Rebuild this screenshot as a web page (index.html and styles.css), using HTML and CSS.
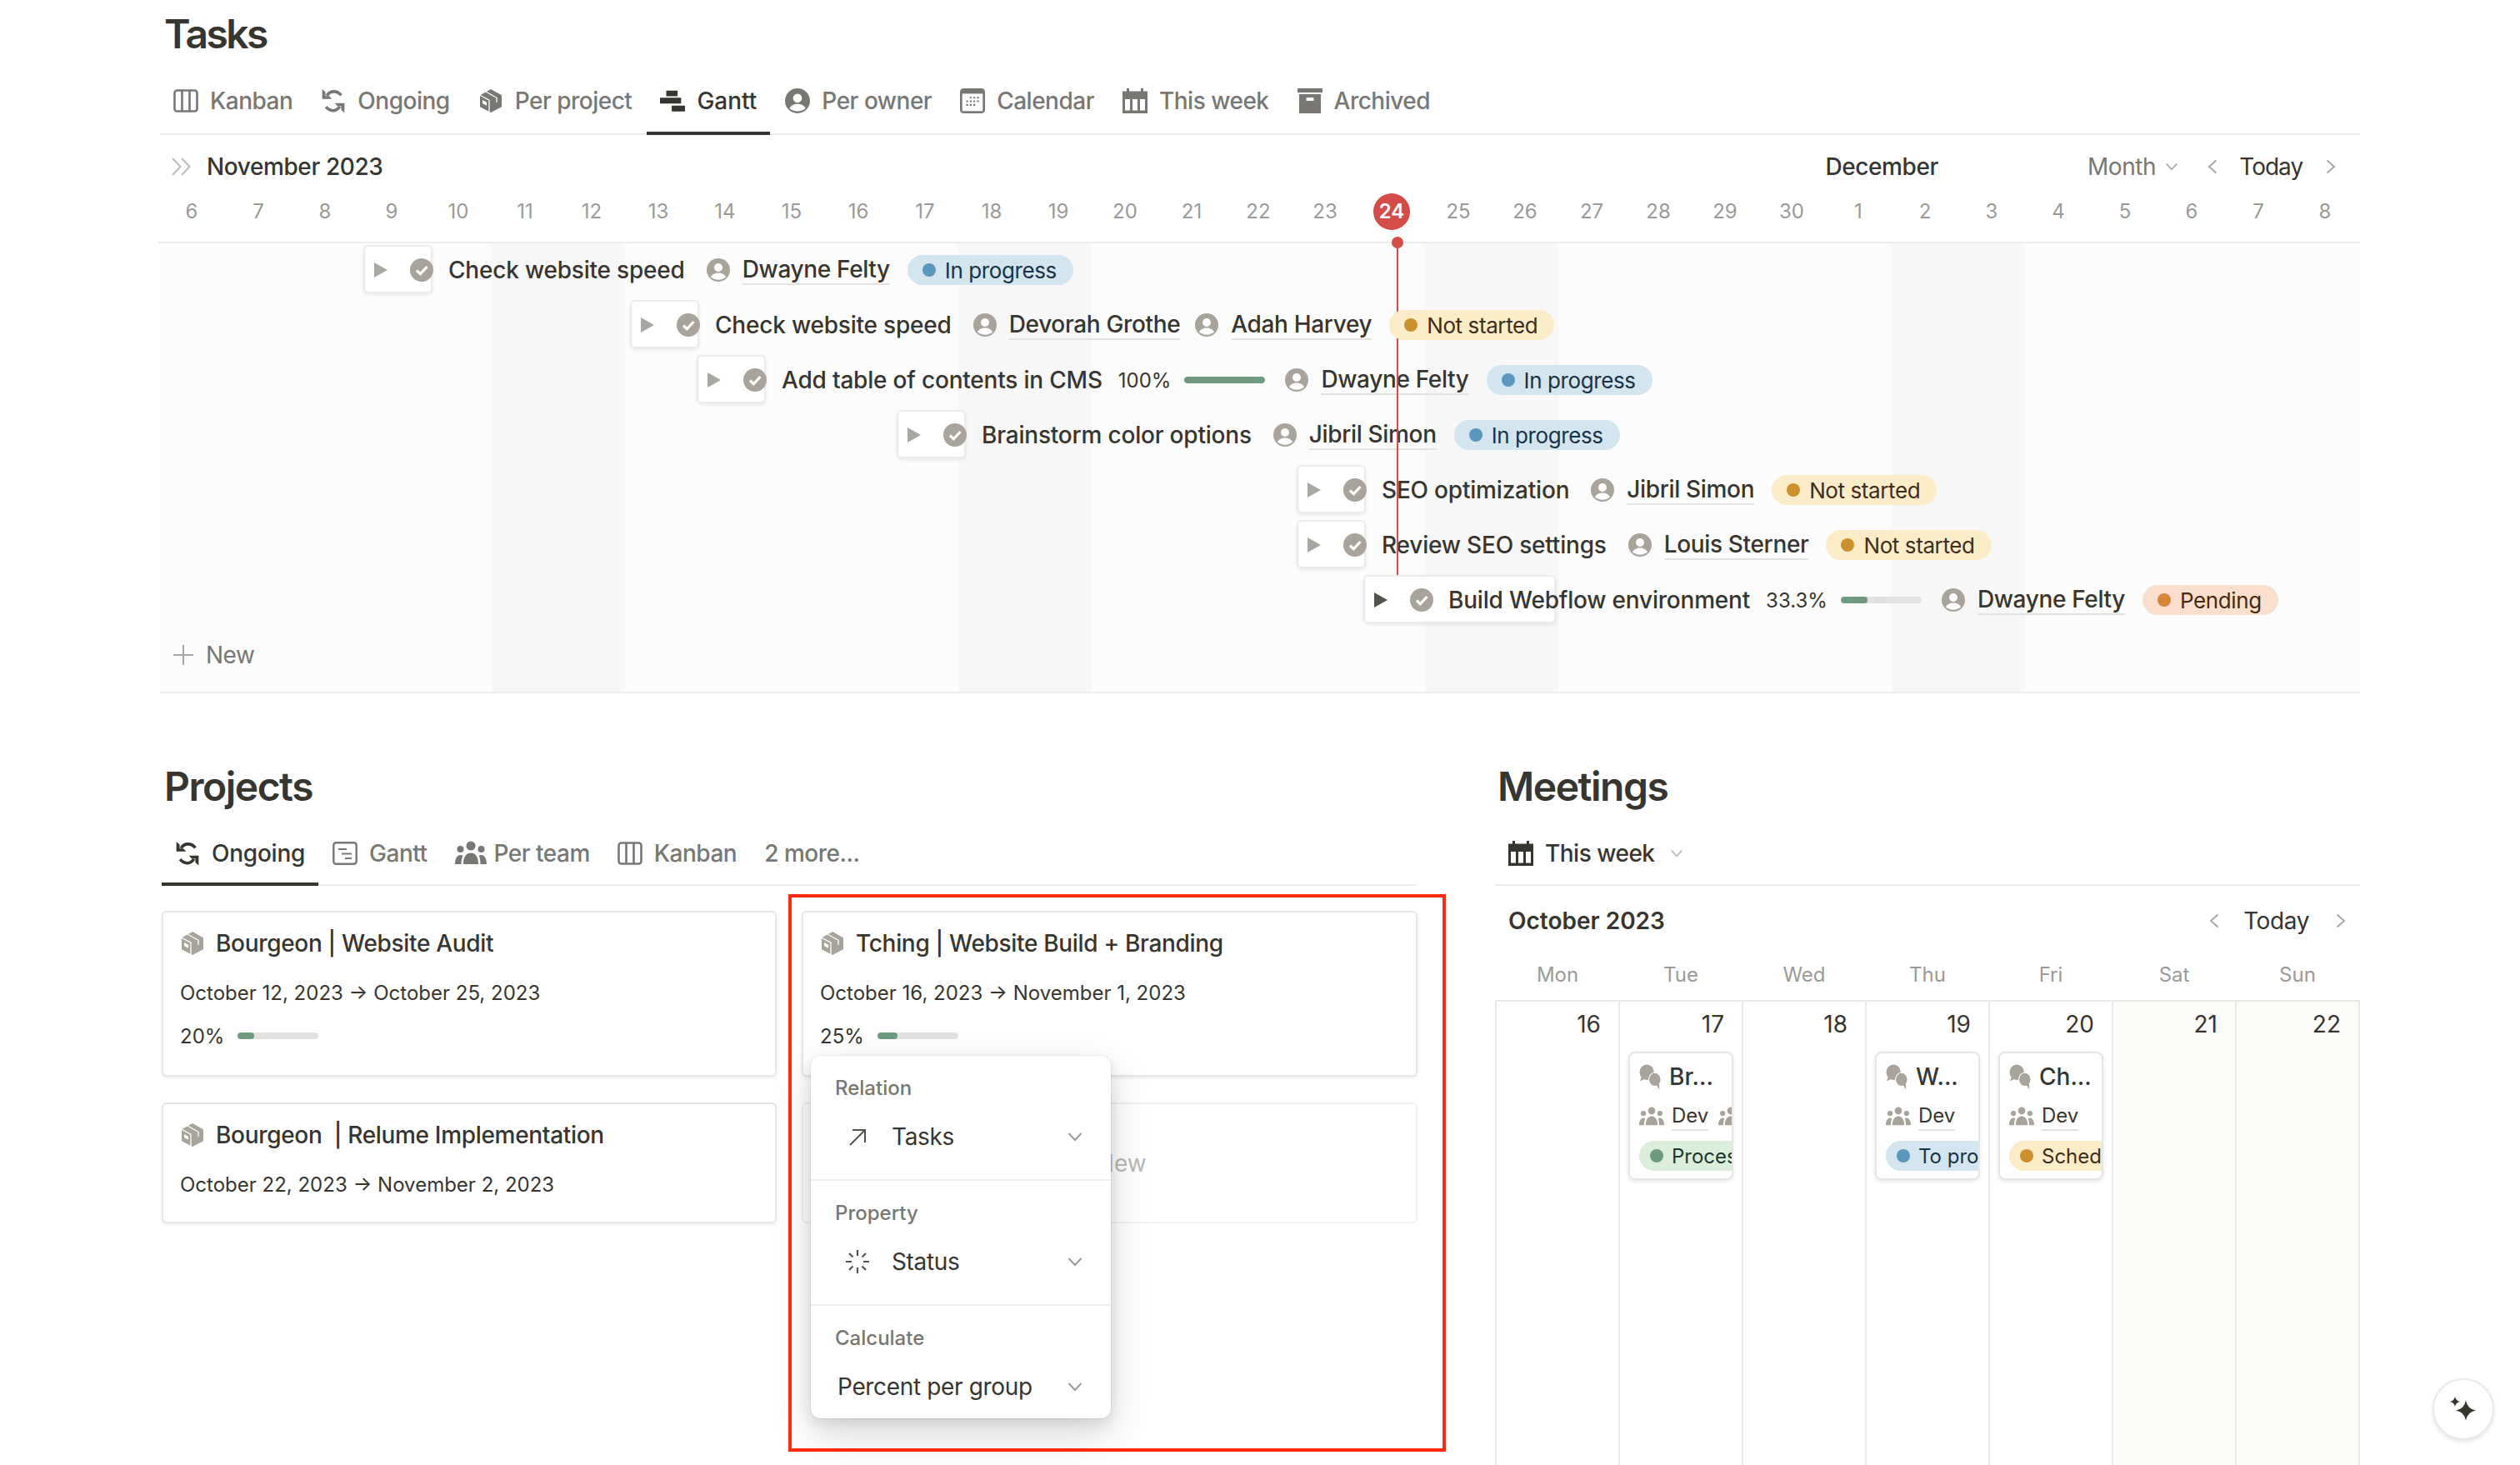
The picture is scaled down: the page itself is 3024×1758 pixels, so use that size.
FILE: index.html
```html
<!DOCTYPE html>
<html lang="en">
<head>
<meta charset="utf-8">
<title>Workspace</title>
<link rel="stylesheet" href="styles.css">
</head>
<body>
<svg class="defs" width="0" height="0" aria-hidden="true">
  <symbol id="i-kanban" viewBox="0 0 30 30"><rect x="1.500" y="2.500" width="27" height="25" rx="3" fill="none" stroke="currentColor" stroke-width="2.600"/><path d="M10.500 3v24M19.500 3v24" stroke="currentColor" stroke-width="2.600"/></symbol>
  <symbol id="i-sync" viewBox="2 1.500 26 27"><path d="M8 9.500C10 6.200 13 5 15.500 5c3.500 0 6 1.500 8 4" fill="none" stroke="currentColor" stroke-width="3.200"/><path d="M3 2.500l0 10.500 10.500 0-3-3.200-4 0 0-4.300z" fill="currentColor"/><path d="M22 21c-2 3-4.500 4.500-7.500 4.500s-5.500-1.500-7.500-4" fill="none" stroke="currentColor" stroke-width="3.200"/><path d="M27 28V17.500H16.500l3 3.200h4v4.300z" fill="currentColor"/></symbol>
  <symbol id="i-box" viewBox="0 0 30 30"><path d="M15 1l13 7.200v14L15 29 2 22.200V8.200z" fill="currentColor"/><path d="M8.500 3.800L22 11.300v5.500M2 8.200l11 6V29" fill="none" stroke="#fff" stroke-width="1.300"/><path d="M5 14l5 2.800v4L5 18z" fill="#fff"/></symbol>
  <symbol id="i-gantt" viewBox="0 0 32 28"><path d="M8 1h14.500v7H8zM0 10h27v7.500H0zM15 20h17v7.500H15z" fill="currentColor"/></symbol>
  <symbol id="i-person" viewBox="0 0 28 28"><circle cx="14" cy="14" r="14" fill="currentColor"/><circle cx="14" cy="11" r="5" fill="#fff"/><path d="M5 22.500c1.500-3.500 5-5 9-5s7.500 1.500 9 5c-2.300 2-5.500 3.200-9 3.200s-6.700-1.200-9-3.200z" fill="#fff"/></symbol>
  <symbol id="i-check" viewBox="0 0 28 28"><circle cx="14" cy="14" r="14" fill="currentColor"/><path d="M8 14.500l4.300 4.300L20.500 10" fill="none" stroke="#fff" stroke-width="3.200"/></symbol>
  <symbol id="i-cal" viewBox="0 0 28 28"><rect x="0" y="0" width="28" height="28" rx="4" fill="currentColor"/><rect x="2.500" y="6" width="23" height="19.500" fill="#fff"/><g fill="currentColor"><path d="M11 9.500h2v2h-2zM15 9.500h2v2h-2zM19 9.500h2v2h-2zM7 13.500h2v2H7zM11 13.500h2v2h-2zM15 13.500h2v2h-2zM19 13.500h2v2h-2zM7 17.500h2v2H7zM11 17.500h2v2h-2zM15 17.500h2v2h-2z"/></g></symbol>
  <symbol id="i-week" viewBox="0 0 30 30"><path d="M0 3.500h5V0h3v3.500h14V0h3v3.500h5V30H0z" fill="currentColor"/><path d="M3 13h6v13.500H3zM12 13h6v13.500h-6zM21 13h6v13.500h-6z" fill="#fff"/></symbol>
  <symbol id="i-archive" viewBox="0 0 30 30"><path d="M0 0h30v5H0zM2 7h26v23H2z" fill="currentColor"/><rect x="10.500" y="11" width="9" height="4" rx="1" fill="#fff"/></symbol>
  <symbol id="i-list" viewBox="0 0 30 28"><rect x="1.300" y="1.300" width="27.400" height="25.400" rx="3" fill="none" stroke="currentColor" stroke-width="2.400"/><path d="M7 9h10M11 14.500h12M15 20h8" stroke="currentColor" stroke-width="2.200"/></symbol>
  <symbol id="i-team" viewBox="0 0 38 30"><circle cx="19" cy="6" r="5.500" fill="currentColor"/><circle cx="6.500" cy="10" r="4" fill="currentColor"/><circle cx="31.500" cy="10" r="4" fill="currentColor"/><path d="M10 28c0-9 3.500-13.500 9-13.500S28 19 28 28z" fill="currentColor"/><path d="M0 28c0-6.500 2.500-11 6.500-11 1.200 0 2 .3 2.800.8C8 20.500 7.500 24 7.500 28zM38 28c0-6.500-2.500-11-6.500-11-1.200 0-2 .3-2.800.8 1.300 2.700 1.800 6.200 1.800 10.200z" fill="currentColor"/></symbol>
  <symbol id="i-chat" viewBox="0 0 28 32"><ellipse cx="9.500" cy="10" rx="9" ry="9.500" fill="currentColor"/><path d="M3 16l-2 5 7-3z" fill="currentColor"/><ellipse cx="19.500" cy="19" rx="8" ry="9" fill="#fff"/><ellipse cx="19.500" cy="19" rx="7" ry="8" fill="currentColor"/><path d="M21 25l4 6.500v-8z" fill="currentColor"/></symbol>
  <symbol id="i-down" viewBox="0 0 18 12"><path d="M1.500 2L9 10l7.500-8" fill="none" stroke="currentColor" stroke-width="2"/></symbol>
  <symbol id="i-left" viewBox="0 0 12 18"><path d="M10.500 1.500L2 9l8.500 7.500" fill="none" stroke="currentColor" stroke-width="2"/></symbol>
  <symbol id="i-right" viewBox="0 0 12 18"><path d="M1.500 1.500L10 9l-8.500 7.500" fill="none" stroke="currentColor" stroke-width="2"/></symbol>
  <symbol id="i-play" viewBox="0 0 16 18"><path d="M0 0l16 9-16 9z" fill="currentColor"/></symbol>
  <symbol id="i-plus" viewBox="0 0 24 24"><path d="M12 0v24M0 12h24" stroke="currentColor" stroke-width="2"/></symbol>
</svg>

<div class="page">
  <section class="tasks">
    <h1 class="title">Tasks</h1>
    <nav class="tabs">
      <a class="tab"><svg class="ic"><use href="#i-kanban"/></svg>Kanban</a>
      <a class="tab"><svg class="ic"><use href="#i-sync"/></svg>Ongoing</a>
      <a class="tab"><svg class="ic"><use href="#i-box"/></svg>Per project</a>
      <a class="tab on"><svg class="ic"><use href="#i-gantt"/></svg>Gantt</a>
      <a class="tab"><svg class="ic"><use href="#i-person"/></svg>Per owner</a>
      <a class="tab"><svg class="ic"><use href="#i-cal"/></svg>Calendar</a>
      <a class="tab"><svg class="ic"><use href="#i-week"/></svg>This week</a>
      <a class="tab"><svg class="ic"><use href="#i-archive"/></svg>Archived</a>
    </nav>
    <div class="ghead">
      <svg class="dbl" viewBox="0 0 24 22"><path d="M1 1l9.500 10L1 21M12 1l9.500 10L12 21" fill="none" stroke="#bdbcb9" stroke-width="2"/></svg>
      <span class="month nov">November 2023</span>
      <span class="month dec">December</span>
      <span class="ctl grey">Month</span>
      <svg class="chev-d"><use href="#i-down"/></svg>
      <svg class="chev-l"><use href="#i-left"/></svg>
      <span class="ctl today">Today</span>
      <svg class="chev-r"><use href="#i-right"/></svg>
    </div>
    <div class="days">
      <span>6</span><span>7</span><span>8</span><span>9</span><span>10</span><span>11</span><span>12</span><span>13</span><span>14</span><span>15</span><span>16</span><span>17</span><span>18</span><span>19</span><span>20</span><span>21</span><span>22</span><span>23</span><span class="now"><b>24</b></span><span>25</span><span>26</span><span>27</span><span>28</span><span>29</span><span>30</span><span>1</span><span>2</span><span>3</span><span>4</span><span>5</span><span>6</span><span>7</span><span>8</span>
    </div>
    <div class="gbody">
      <div class="shade">
        <i class="we w1"></i><i class="we w2"></i><i class="we w3"></i><i class="we w4"></i>
      </div>
      <div class="rows">
        <div class="bar" style="margin-left:244px">
          <div class="handle"></div>
          <svg class="play"><use href="#i-play"/></svg><svg class="chk"><use href="#i-check"/></svg>
          <span class="name">Check website speed</span>
          <svg class="who"><use href="#i-person"/></svg><span class="owner">Dwayne Felty</span>
          <span class="pill blue"><i></i>In progress</span>
        </div>
        <div class="bar" style="margin-left:564px">
          <div class="handle"></div>
          <svg class="play"><use href="#i-play"/></svg><svg class="chk"><use href="#i-check"/></svg>
          <span class="name">Check website speed</span>
          <svg class="who"><use href="#i-person"/></svg><span class="owner">Devorah Grothe</span>
          <svg class="who second"><use href="#i-person"/></svg><span class="owner">Adah Harvey</span>
          <span class="pill yellow"><i></i>Not started</span>
        </div>
        <div class="bar" style="margin-left:644px">
          <div class="handle"></div>
          <svg class="play"><use href="#i-play"/></svg><svg class="chk"><use href="#i-check"/></svg>
          <span class="name">Add table of contents in CMS</span>
          <span class="pct">100%</span><span class="prog"><i style="width:100%"></i></span>
          <svg class="who tight"><use href="#i-person"/></svg><span class="owner">Dwayne Felty</span>
          <span class="pill blue"><i></i>In progress</span>
        </div>
        <div class="bar" style="margin-left:884px">
          <div class="handle"></div>
          <svg class="play"><use href="#i-play"/></svg><svg class="chk"><use href="#i-check"/></svg>
          <span class="name">Brainstorm color options</span>
          <svg class="who"><use href="#i-person"/></svg><span class="owner">Jibril Simon</span>
          <span class="pill blue"><i></i>In progress</span>
        </div>
        <div class="bar" style="margin-left:1364px">
          <div class="handle"></div>
          <svg class="play"><use href="#i-play"/></svg><svg class="chk"><use href="#i-check"/></svg>
          <span class="name">SEO optimization</span>
          <svg class="who"><use href="#i-person"/></svg><span class="owner">Jibril Simon</span>
          <span class="pill yellow"><i></i>Not started</span>
        </div>
        <div class="bar" style="margin-left:1364px">
          <div class="handle"></div>
          <svg class="play"><use href="#i-play"/></svg><svg class="chk"><use href="#i-check"/></svg>
          <span class="name">Review SEO settings</span>
          <svg class="who"><use href="#i-person"/></svg><span class="owner">Louis Sterner</span>
          <span class="pill yellow"><i></i>Not started</span>
        </div>
        <div class="bar" style="margin-left:1444px">
          <div class="handle long"></div>
          <svg class="play dark"><use href="#i-play"/></svg><svg class="chk"><use href="#i-check"/></svg>
          <span class="name">Build Webflow environment</span>
          <span class="pct">33.3%</span><span class="prog"><i style="width:33.3%"></i></span>
          <svg class="who tight"><use href="#i-person"/></svg><span class="owner">Dwayne Felty</span>
          <span class="pill orange"><i></i>Pending</span>
        </div>
        <div class="newrow"><svg class="plus"><use href="#i-plus"/></svg>New</div>
      </div>
    </div>
  </section>

  <div class="lower">
    <section class="projects">
      <h2 class="title">Projects</h2>
      <nav class="tabs">
        <a class="tab on"><svg class="ic"><use href="#i-sync"/></svg>Ongoing</a>
        <a class="tab"><svg class="ic"><use href="#i-list"/></svg>Gantt</a>
        <a class="tab"><svg class="ic wide"><use href="#i-team"/></svg>Per team</a>
        <a class="tab"><svg class="ic"><use href="#i-kanban"/></svg>Kanban</a>
        <a class="tab">2 more...</a>
      </nav>
      <div class="cards">
        <article class="card tall">
          <div class="ctitle"><svg class="cbox"><use href="#i-box"/></svg>Bourgeon | Website Audit</div>
          <div class="cdate">October 12, 2023 → October 25, 2023</div>
          <div class="cpct"><span>20%</span><span class="prog"><i style="width:20%"></i></span></div>
        </article>
        <article class="card tall">
          <div class="ctitle"><svg class="cbox"><use href="#i-box"/></svg>Tching | Website Build + Branding</div>
          <div class="cdate">October 16, 2023 → November 1, 2023</div>
          <div class="cpct"><span>25%</span><span class="prog"><i style="width:25%"></i></span></div>
        </article>
        <article class="card">
          <div class="ctitle"><svg class="cbox"><use href="#i-box"/></svg>Bourgeon &nbsp;| Relume Implementation</div>
          <div class="cdate">October 22, 2023 → November 2, 2023</div>
        </article>
        <article class="card ghost"><span class="gplus">+</span>New</article>
      </div>
    </section>

    <section class="meetings">
      <h2 class="title">Meetings</h2>
      <nav class="tabs single">
        <a class="tab strong"><svg class="ic"><use href="#i-week"/></svg>This week<svg class="chev-v"><use href="#i-down"/></svg></a>
      </nav>
      <div class="calhead">
        <span class="calmonth">October 2023</span>
        <svg class="chev-l"><use href="#i-left"/></svg>
        <span class="ctl today">Today</span>
        <svg class="chev-r"><use href="#i-right"/></svg>
      </div>
      <div class="weekdays"><span>Mon</span><span>Tue</span><span>Wed</span><span>Thu</span><span>Fri</span><span>Sat</span><span>Sun</span></div>
      <div class="calgrid">
        <div class="cell"><div class="num">16</div></div>
        <div class="cell"><div class="num">17</div>
          <div class="ev">
            <div class="evt"><svg class="chat"><use href="#i-chat"/></svg>Br...</div>
            <div class="evp"><svg class="team"><use href="#i-team"/></svg><span class="evd">Dev</span><svg class="team more"><use href="#i-team"/></svg></div>
            <span class="pill small green"><i></i>Processing</span>
          </div>
        </div>
        <div class="cell"><div class="num">18</div></div>
        <div class="cell"><div class="num">19</div>
          <div class="ev">
            <div class="evt"><svg class="chat"><use href="#i-chat"/></svg>W...</div>
            <div class="evp"><svg class="team"><use href="#i-team"/></svg><span class="evd">Dev</span></div>
            <span class="pill small blue"><i></i>To process</span>
          </div>
        </div>
        <div class="cell"><div class="num">20</div>
          <div class="ev">
            <div class="evt"><svg class="chat"><use href="#i-chat"/></svg>Ch...</div>
            <div class="evp"><svg class="team"><use href="#i-team"/></svg><span class="evd">Dev</span></div>
            <span class="pill small yellow"><i></i>Scheduled</span>
          </div>
        </div>
        <div class="cell off"><div class="num">21</div></div>
        <div class="cell off"><div class="num">22</div></div>
      </div>
    </section>
  </div>

  <div class="todayline"></div>

  <div class="popover">
    <div class="psec">
      <div class="plabel">Relation</div>
      <div class="prow"><svg class="picon" viewBox="0 0 24 24"><path d="M3 22L21 4M6 4h15v15" fill="none" stroke="#55534e" stroke-width="2"/></svg><span>Tasks</span><svg class="pchev"><use href="#i-down"/></svg></div>
    </div>
    <div class="psec">
      <div class="plabel">Property</div>
      <div class="prow"><svg class="picon big" viewBox="0 0 30 30"><path d="M15 1v7M15 22v7M1 15h7M22 15h7M5 5l4.500 4.500M20.500 20.500L25 25M25 5l-4.500 4.500M9.500 20.500L5 25" fill="none" stroke="#55534e" stroke-width="2.200"/></svg><span>Status</span><svg class="pchev"><use href="#i-down"/></svg></div>
    </div>
    <div class="psec last">
      <div class="plabel">Calculate</div>
      <div class="prow plain"><span>Percent per group</span><svg class="pchev"><use href="#i-down"/></svg></div>
    </div>
  </div>

  <div class="redbox"></div>

  <button class="fab"><svg viewBox="0 0 32 30"><path d="M19 4.500Q20.800 14.700 31 16.500 20.800 18.300 19 28.500 17.200 18.300 7 16.500 17.200 14.700 19 4.500zM6 0Q7 5 12 6 7 7 6 12 5 7 0 6 5 5 6 0z" fill="#37352f"/></svg></button>
</div>
</body>
</html>
```
FILE: styles.css
```css
* { box-sizing: border-box; }
html, body { margin: 0; padding: 0; height: 1758px; overflow: hidden; background: #fff; }
body { font-family: Inter, "Liberation Sans", sans-serif; color: #37352f; font-size: 28px; }
.defs { position: absolute; }
.page { position: relative; width: 3024px; height: 1758px; overflow: hidden; padding-left: 192px; }
.tasks { width: 2640px; }

.title { margin: 0; height: 80px; line-height: 82px; font-size: 48px; font-weight: 600; padding-left: 5px; letter-spacing: -1.5px; }
.tasks .title { letter-spacing: -2.6px; }

.tabs { display: flex; gap: 2px; height: 82px; padding-top: 2px; align-items: stretch; border-bottom: 2px solid #ededec; }
.tab { display: flex; align-items: center; gap: 14px; padding: 0 16px; color: #787774; font-weight: 500; font-size: 28px; letter-spacing: -0.5px; position: relative; white-space: nowrap; }
.tab.on { color: #37352f; letter-spacing: 0; }
.tab.on::after { content: ""; position: absolute; left: 0; right: 0; bottom: -2px; height: 4px; background: #37352f; }
.tab.strong { color: #37352f; }
.ic { width: 30px; height: 30px; flex: none; }
.ic.wide { width: 38px; margin-right: -5px; }

.ghead { display: flex; align-items: center; height: 76px; position: relative; letter-spacing: -0.4px; }
.dbl { width: 24px; height: 22px; margin-left: 14px; }
.month { font-weight: 500; font-size: 28px; }
.nov { margin-left: 18px; }
.dec { margin-left: 1731px; }
.ctl { font-size: 28px; letter-spacing: -0.4px; }
.grey { color: #787774; margin-left: 179px; }
.today { color: #37352f; }
.chev-d { width: 16px; height: 10px; margin-left: 11px; color: #a8a7a3; }
.chev-l { width: 12px; height: 18px; margin-left: 35px; color: #a8a7a3; }
.chev-r { width: 12px; height: 18px; margin-left: 28px; color: #a8a7a3; }
.ghead .today { margin-left: 26px; letter-spacing: -1px; }

.days { display: grid; grid-template-columns: repeat(33, 80px); margin-left: -2px; height: 54px; border-bottom: 2px solid #ededec; width: 2642px; color: #9b9a97; font-size: 24px; line-height: 32px; text-align: center; }
.now { position: relative; }
.now b { position: absolute; left: 18px; top: -6px; width: 44px; height: 44px; border-radius: 50%; background: #d44c47; color: #fff; font-weight: 600; line-height: 44px; }

.gbody { position: relative; height: 540px; background: #fcfcfc; border-bottom: 2px solid #ededec; }
.shade { position: absolute; inset: 0 0 0 -2px; display: grid; grid-template-columns: repeat(33, 80px); grid-template-rows: 1fr; }
.we { background: #f7f7f7; grid-row: 1; }
.w1 { grid-column: 6 / span 2; }
.w2 { grid-column: 13 / span 2; }
.w3 { grid-column: 20 / span 2; }
.w4 { grid-column: 27 / span 2; }
.rows { position: relative; top: -1px; }

.bar { position: relative; display: flex; align-items: center; height: 66px; white-space: nowrap; }
.handle { position: absolute; left: 0; top: 3px; width: 83px; height: 58px; background: #fff; border: 2px solid #ececeb; border-radius: 6px; box-shadow: 0 2px 4px rgba(15, 15, 15, 0.08); z-index: 1; }
.handle.long { width: 231px; }
.play { position: relative; z-index: 1; width: 16px; height: 18px; margin-left: 13px; color: #a8a7a3; flex: none; }
.play.dark { color: #55534e; }
.chk { position: relative; z-index: 1; width: 28px; height: 28px; margin-left: 27px; color: #a8a49c; flex: none; }
.name { position: relative; z-index: 1; margin-left: 18px; font-weight: 500; font-size: 28px; letter-spacing: -0.2px; }
.who { width: 28px; height: 28px; margin-left: 26px; color: #a8a49c; flex: none; }
.who.second { margin-left: 18px; }
.who.tight { margin-left: 24px; }
.owner { margin-left: 15px; font-weight: 500; letter-spacing: -0.35px; border-bottom: 2px solid #e3e2e0; line-height: 34px; }
.pct { margin-left: 19px; font-size: 24px; }
.prog { display: inline-block; width: 97px; height: 8px; border-radius: 4px; background: #e3e2e0; margin-left: 16px; overflow: hidden; flex: none; }
.prog i { display: block; height: 100%; border-radius: 4px; background: #6c9b7d; }

.pill { position: relative; z-index: 3; display: inline-flex; align-items: center; height: 36px; border-radius: 18px; padding: 0 20px 0 18px; margin-left: 21px; font-size: 26px; letter-spacing: -0.4px; }
.pill i { width: 16px; height: 16px; border-radius: 50%; margin-right: 11px; flex: none; }
.blue { background: #d3e5ef; color: #183347; }
.blue i { background: #5b97bd; }
.yellow { background: #fdecc8; color: #402c1b; }
.yellow i { background: #cb912f; }
.orange { background: #fae0cc; color: #49290e; }
.orange i { background: #d9843b; }
.green { background: #dbeddb; color: #1c3829; }
.green i { background: #6c9b7d; }

.newrow { height: 66px; display: flex; align-items: center; padding-left: 16px; color: #787774; font-size: 28px; letter-spacing: -0.5px; position: relative; }
.plus { width: 24px; height: 24px; color: #a8a7a3; margin-right: 15px; flex: none; }

.lower { display: flex; gap: 94px; margin-left: 2px; margin-top: 71px; }
.projects { width: 1506px; flex: none; }
.meetings { width: 1038px; flex: none; }
.projects .tabs, .meetings .tabs { height: 80px; padding-top: 4px; }
.projects .tabs { gap: 1px; }
.projects .tab.on { letter-spacing: -0.25px; }
.projects .title { padding-left: 3px; }
.meetings .title { padding-left: 3px; }

.cards { display: grid; grid-template-columns: 738px 739px; gap: 31px 30px; margin-top: 30px; }
.card { height: 145px; border: 2px solid #e6e6e5; border-radius: 6px; padding: 0 20px; box-shadow: 0 2px 4px rgba(15, 15, 15, 0.08); background: #fff; }
.card.tall { height: 199px; }
.ctitle { display: flex; align-items: center; margin-top: 19px; height: 36px; font-weight: 500; font-size: 28px; letter-spacing: -0.32px; white-space: pre; }
.cbox { width: 30px; height: 30px; color: #a8a49c; margin-right: 13px; flex: none; }
.cdate { margin-top: 27px; height: 30px; line-height: 30px; font-size: 24px; }
.cpct { display: flex; align-items: center; margin-top: 21px; height: 30px; font-size: 24px; }
.cpct .prog { margin-left: 16px; }
.card.ghost { box-shadow: none; border-color: #f1f1f0; display: flex; align-items: center; justify-content: center; color: #b9b8b5; font-size: 28px; }
.gplus { margin-right: 10px; }

.single { gap: 0; }
.chev-v { width: 16px; height: 10px; color: #b9b8b5; margin-left: 4px; }
.calhead { display: flex; align-items: center; height: 84px; }
.calmonth { margin-left: 16px; font-size: 28px; font-weight: 600; letter-spacing: 0; }
.calhead .chev-l { margin-left: auto; }
.calhead .today { margin-left: 29px; }
.calhead .chev-r { margin-left: 32px; margin-right: 17px; }
.weekdays { display: grid; grid-template-columns: repeat(7, 148px); height: 53px; padding-top: 1px; color: #9b9a97; font-size: 24px; text-align: center; line-height: 44px; padding-left: 1px; }
.calgrid { display: grid; grid-template-columns: repeat(7, 148px); height: 620px; border-top: 2px solid #e9e9e8; border-left: 2px solid #e9e9e8; }
.cell { border-right: 2px solid #e9e9e8; padding: 0 10px; position: relative; }
.cell.off { background: #fbfbfa; }
.num { text-align: right; font-size: 28px; line-height: 54px; padding-right: 11px; }
.ev { margin-top: 6px; width: 126px; height: 154px; border: 2px solid #e6e6e5; border-radius: 8px; background: #fff; box-shadow: 0 2px 5px rgba(15, 15, 15, 0.1); overflow: hidden; padding: 0 0 0 11px; white-space: nowrap; }
.evt { display: flex; align-items: center; height: 36px; margin-top: 10px; font-weight: 500; font-size: 28px; }
.chat { width: 27px; height: 31px; color: #a8a49c; margin-right: 9px; flex: none; }
.evp { display: flex; align-items: center; height: 40px; margin-top: 10px; font-size: 24px; }
.team { width: 30px; height: 24px; color: #a8a49c; flex: none; }
.team.more { margin-left: 12px; }
.evd { margin-left: 9px; border-bottom: 2px solid #e3e2e0; line-height: 32px; }
.pill.small { margin-left: 0; margin-top: 9px; font-size: 24px; letter-spacing: 0; padding: 0 0 0 13px; width: 200px; display: flex; }
.pill.small i { margin-right: 10px; }

.todayline { position: absolute; left: 1676px; top: 284px; width: 2px; height: 406px; background: #d44c47; z-index: 2; }
.todayline::before { content: ""; position: absolute; left: -6px; top: 0; width: 14px; height: 14px; border-radius: 50%; background: #d44c47; }

.popover { position: absolute; left: 973px; top: 1267px; width: 360px; height: 435px; background: #fff; border-radius: 12px; box-shadow: 0 0 0 1px rgba(15, 15, 15, 0.04), 0 6px 14px rgba(15, 15, 15, 0.1), 0 18px 50px rgba(15, 15, 15, 0.16); z-index: 6; }
.psec { height: 150px; padding-top: 23px; border-bottom: 2px solid #f0f0ef; }
.psec.last { height: 135px; border-bottom: 0; }
.plabel { padding-left: 29px; height: 32px; line-height: 32px; font-size: 24px; font-weight: 500; color: #787774; }
.prow { display: flex; align-items: center; height: 58px; margin-top: 13px; padding-left: 44px; font-size: 28px; letter-spacing: -0.35px; }
.prow.plain { padding-left: 32px; }
.picon { width: 24px; height: 24px; flex: none; margin-right: 29px; }
.picon.big { width: 30px; height: 30px; margin-left: -3px; margin-right: 26px; }
.pchev { width: 18px; height: 12px; color: #9b9a97; margin-left: auto; margin-right: 34px; }

.redbox { position: absolute; left: 946px; top: 1073px; width: 789px; height: 669px; border: 4px solid #ff2a0d; z-index: 7; }

.fab { position: absolute; left: 2919px; top: 1654px; width: 74px; height: 74px; border-radius: 50%; background: #fff; border: 2px solid #ecebea; box-shadow: 0 2px 5px rgba(15, 15, 15, 0.12); padding: 0; display: flex; align-items: center; justify-content: center; }
.fab svg { width: 32px; height: 30px; }
```
